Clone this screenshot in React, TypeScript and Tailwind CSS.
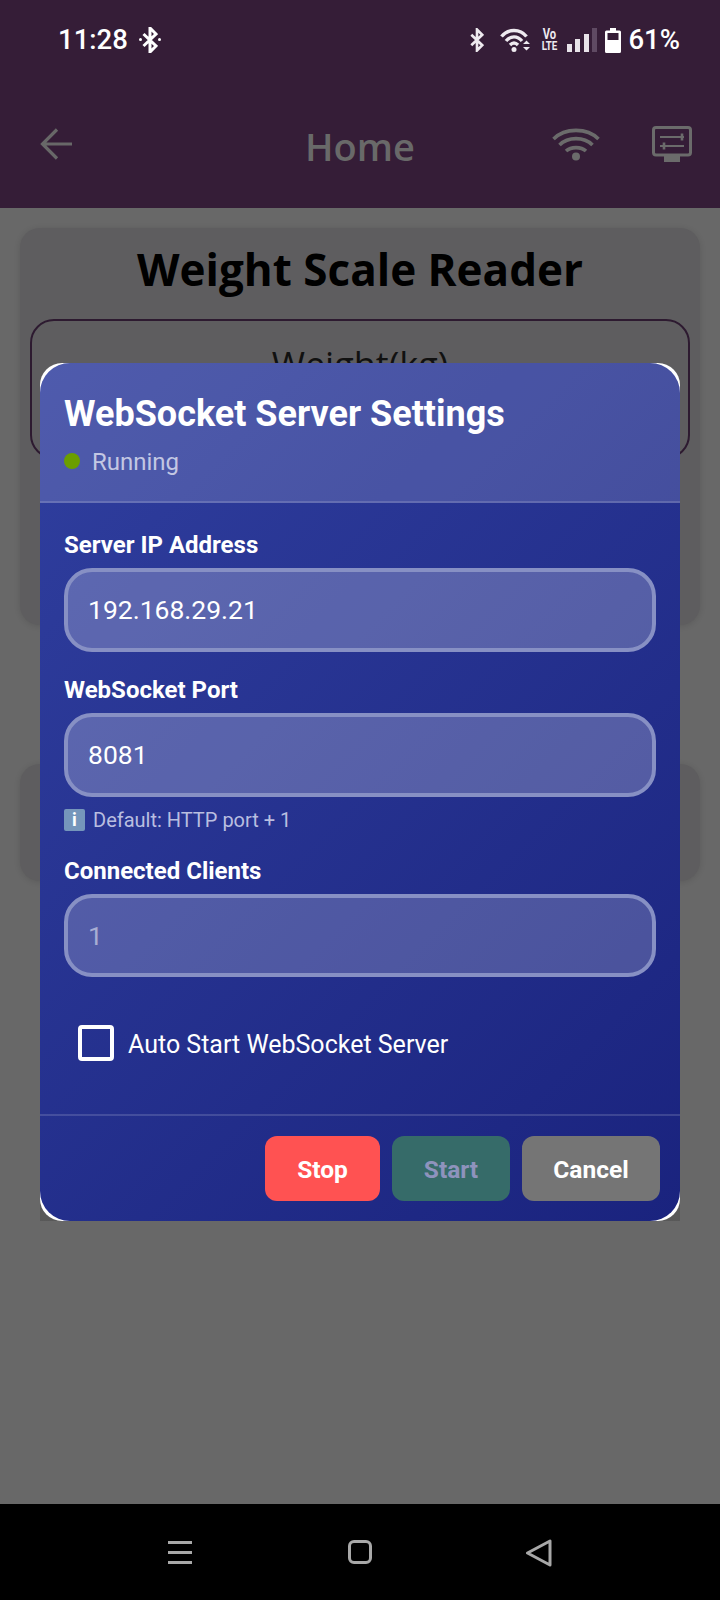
import React from "react";

const roboto = "font-['Roboto',sans-serif]";

function BtSmall({ className }: { className: string }) {
  return (
    <svg viewBox="0 0 16 26" className={className} fill="none" stroke="currentColor" strokeWidth="3">
      <path d="M1.5 7 L14 19 L8 25 V1 L14 7 L1.5 19" />
    </svg>
  );
}

function StatusBar() {
  return (
    <div className="h-[80px] flex items-start justify-between pl-[58px] pr-[40px] pt-[24px] text-white font-['Roboto',sans-serif]">
      <div className="flex items-center h-[32px]">
        <span className="text-[27.5px] font-medium leading-[32px]">11:28</span>
        <span className="relative ml-[11px] w-[22px] h-[26px] block">
          <BtSmall className="w-[16px] h-[26px] ml-[3px] text-white" />
          <span className="absolute left-0 top-[11px] w-[3px] h-[3px] bg-white rounded-full" />
          <span className="absolute right-0 top-[11px] w-[3px] h-[3px] bg-white rounded-full" />
        </span>
      </div>
      <div className="flex items-center h-[32px]">
        <BtSmall className="w-[14px] h-[24px] text-[#eeeaef]" />
        <svg viewBox="0 0 31 24" className="ml-[16px] w-[31px] h-[24px]" fill="none" stroke="#eeeaef" strokeWidth="3.4">
          <path d="M1.5 8.5 C8 0.5 20 0.5 26.5 8.5" />
          <path d="M6 13 C10.5 7.5 17.5 7.5 22 13" />
          <path d="M10 17 C12.5 14.5 15.5 14.5 18 17" />
          <circle cx="14" cy="21.5" r="2.5" fill="#eeeaef" stroke="none" />
          <path d="M23 16 L26.5 12.5 L30 16 Z M23 19 L26.5 22.5 L30 19 Z" fill="#eeeaef" stroke="none" />
        </svg>
        <div className="ml-[10px] w-[17px] flex flex-col items-center text-[#eeeaef] font-bold scale-x-[0.75]">
          <span className="text-[15px] leading-[12px]">Vo</span>
          <span className="text-[13px] leading-[12px]">LTE</span>
        </div>
        <div className="ml-[9px] flex items-end gap-[3.5px] h-[24px]">
          <div className="w-[5px] h-[8px] bg-[#e8e3e9]" />
          <div className="w-[5px] h-[13px] bg-[#e8e3e9]" />
          <div className="w-[5px] h-[18px] bg-[#e8e3e9]" />
          <div className="w-[5px] h-[24px] bg-[#5f4a63]" />
        </div>
        <svg viewBox="0 0 16 25" className="ml-[8px] w-[16px] h-[25px]">
          <path d="M5 0 H11 V2.5 H14.5 A1.5 1.5 0 0 1 16 4 V23.5 A1.5 1.5 0 0 1 14.5 25 H1.5 A1.5 1.5 0 0 1 0 23.5 V4 A1.5 1.5 0 0 1 1.5 2.5 H5 Z" fill="#fff" />
          <rect x="2.5" y="5" width="11" height="7" fill="#351d37" />
        </svg>
        <span className="ml-[7px] text-[27.5px] font-medium leading-[32px]">61%</span>
      </div>
    </div>
  );
}

function AppBar() {
  return (
    <div className="h-[128px] flex items-start relative text-[#696969]">
      <svg viewBox="0 0 32 32" className="absolute left-[40px] top-[48px] w-[32px] h-[32px]" fill="none" stroke="#686868" strokeWidth="3.2">
        <path d="M17 1.5 L2.5 16 L17 30.5 M2.5 16 H32" />
      </svg>
      <div className="w-full pt-[41px] text-center font-['Open_Sans',sans-serif] font-semibold text-[38px] leading-[50px]">Home</div>
      <svg viewBox="0 0 48 33" className="absolute left-[552px] top-[48px] w-[48px] h-[33px]" fill="none" stroke="#6b6b6b" strokeWidth="3.6">
        <path d="M1.5 11 C13 -0.5 35 -0.5 46.5 11" />
        <path d="M7.5 17 C16 8.5 32 8.5 40.5 17" />
        <path d="M14 23 C19 18.5 29 18.5 34 23" />
        <circle cx="24" cy="28.5" r="4" fill="#6b6b6b" stroke="none" />
      </svg>
      <svg viewBox="0 0 40 36" className="absolute left-[652px] top-[46px] w-[40px] h-[36px]" fill="none">
        <rect x="1.5" y="1.5" width="37" height="27.5" rx="2.5" stroke="#6b6b6b" strokeWidth="3" />
        <rect x="12" y="30" width="16" height="6" fill="#6b6b6b" />
        <path d="M8 11 H32 M8 20 H32" stroke="#6b6b6b" strokeWidth="2.2" />
        <path d="M30 7.5 V14.5" stroke="#6b6b6b" strokeWidth="2.6" />
        <path d="M12 16.5 V23.5" stroke="#6b6b6b" strokeWidth="2.6" />
      </svg>
    </div>
  );
}

function Background() {
  return (
    <div className="flex-1 bg-[#686868] px-[20px] pt-[20px] flex flex-col">
      <div className="h-[397px] rounded-[20px] bg-[#5e5d5f] px-[10px] shadow-[0_1px_6px_rgba(0,0,0,0.12)]">
        <div className="h-[91px] text-center font-['Open_Sans',sans-serif] font-bold text-[44px] leading-[83px] text-black">Weight Scale Reader</div>
        <div className="h-[140px] rounded-[24px] border-2 border-[#2d1a30] text-center font-['Open_Sans',sans-serif] text-[36px] leading-[48px] pt-[20px] text-[#111]">Weight(kg)</div>
      </div>
      <div className="mt-[139px] h-[117px] rounded-[20px] bg-[#5e5d5f] shadow-[0_1px_6px_rgba(0,0,0,0.12)]" />
    </div>
  );
}

function Field({ label, value, dim, h }: { label: string; value: string; dim?: boolean; h: string }) {
  return (
    <div>
      <div className="text-white font-bold text-[24px] leading-[28px]">{label}</div>
      <div className={`mt-[9px] ${h} rounded-[28px] border-4 border-[#8790c4] pl-[20px] flex items-center text-[26.5px] ${dim ? "bg-white/20 text-white/50" : "bg-white/[0.23] text-white"}`}>
        {value}
      </div>
    </div>
  );
}

function Dialog() {
  return (
    <div className={`absolute left-[40px] top-[363px] w-[640px] h-[858px] bg-gradient-to-b from-transparent from-50% to-black/15 ${roboto}`}>
      <div className="w-full h-full rounded-[22px] bg-white">
        <div className="w-full h-full rounded-[30px] overflow-hidden bg-[linear-gradient(135deg,#303f9f,#1a237e)] flex flex-col">
          <div className="h-[140px] shrink-0 bg-white/15 border-b-2 border-white/15 pl-[24px] pt-[28px]">
            <div className="text-white font-bold text-[36px] leading-[46px]">WebSocket Server Settings</div>
            <div className="mt-[9px] flex items-center h-[32px]">
              <span className="w-[16px] h-[16px] rounded-full bg-[#6b9e00] -mt-[2px]" />
              <span className="ml-[12px] text-[24px] text-[#c3c7e3]">Running</span>
            </div>
          </div>
          <div className="px-[24px] pt-[28px] flex-1">
            <Field label="Server IP Address" value="192.168.29.21" h="h-[84px]" />
            <div className="mt-[24px]">
              <Field label="WebSocket Port" value="8081" h="h-[84px]" />
            </div>
            <div className="mt-[8px] h-[30px] flex items-center text-[20px] text-[#b9bee0]">
              <span className="mr-[8px] w-[21px] h-[22px] rounded-[2px] bg-[#7596bb] flex items-center justify-center text-white font-bold text-[18px] leading-none">i</span>
              Default: HTTP port + 1
            </div>
            <div className="mt-[22px]">
              <Field label="Connected Clients" value="1" dim h="h-[83px]" />
            </div>
            <label className="mt-[46px] ml-[14px] flex items-center">
              <span className="w-[36px] h-[36px] rounded-[4px] border-[4px] border-white" />
              <span className="ml-[14px] pt-[3px] text-white text-[25px]">Auto Start WebSocket Server</span>
            </label>
          </div>
          <div className="h-[107px] shrink-0 border-t-2 border-white/15 pt-[20px] pr-[20px] flex justify-end gap-[12px]">
            <div className="w-[115px] h-[65px] pt-[3px] rounded-[12px] bg-[#ff5252] flex items-center justify-center text-white font-bold text-[24.5px]">Stop</div>
            <div className="w-[118px] h-[65px] pt-[3px] rounded-[12px] bg-[#366b69] flex items-center justify-center text-[#8e93bd] font-bold text-[24.5px]">Start</div>
            <div className="w-[138px] h-[65px] pt-[3px] rounded-[12px] bg-[#757575] flex items-center justify-center text-white font-bold text-[24.5px]">Cancel</div>
          </div>
        </div>
      </div>
    </div>
  );
}

function NavBar() {
  return (
    <div className="h-[96px] bg-black flex items-start justify-center relative">
      <div className="absolute left-[168px] top-[37px] w-[24px] flex flex-col gap-[7px]">
        <div className="h-[3px] bg-[#a8a8a8]" />
        <div className="h-[3px] bg-[#a8a8a8]" />
        <div className="h-[3px] bg-[#a8a8a8]" />
      </div>
      <div className="absolute left-[348px] top-[36px] w-[24px] h-[24px] rounded-[6px] border-[3px] border-[#a8a8a8]" />
      <svg viewBox="0 0 26 28" className="absolute left-[526px] top-[35px] w-[26px] h-[28px]" fill="none" stroke="#a8a8a8" strokeWidth="3" strokeLinejoin="round">
        <path d="M1.5 14 L24 2 V26 Z" />
      </svg>
    </div>
  );
}

export default function App() {
  return (
    <div className="relative w-[720px] h-[1600px] flex flex-col overflow-hidden bg-[#351d37]">
      <div className="h-[208px] shrink-0 bg-[#351d37]">
        <StatusBar />
        <AppBar />
      </div>
      <Background />
      <NavBar />
      <Dialog />
    </div>
  );
}
